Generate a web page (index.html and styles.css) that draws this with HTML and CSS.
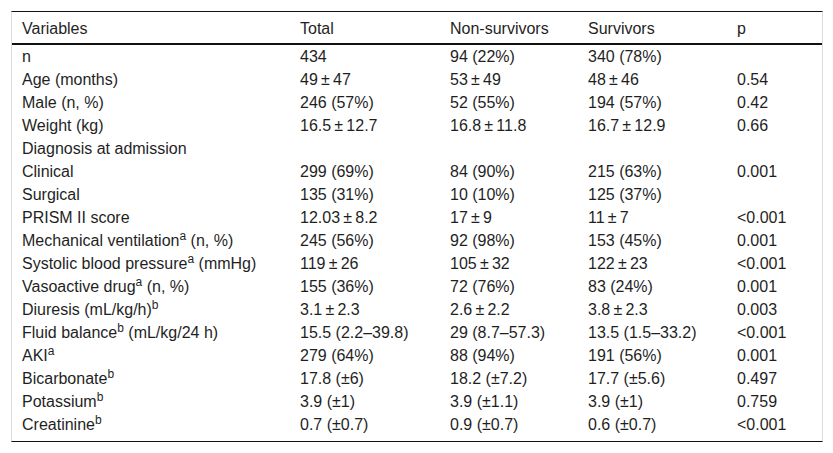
FILE: index.html
```html
<!DOCTYPE html>
<html lang="en">
<head>
<meta charset="utf-8">
<title>Table</title>
<link rel="stylesheet" href="styles.css">
</head>
<body>
<div class="frame">
  <table class="data">
    <colgroup>
      <col class="c1"><col class="c2"><col class="c3"><col class="c4"><col class="c5">
    </colgroup>
    <thead>
      <tr><th>Variables</th><th>Total</th><th>Non-survivors</th><th>Survivors</th><th>p</th></tr>
    </thead>
    <tbody>
      <tr><td>n</td><td>434</td><td>94 (22%)</td><td>340 (78%)</td><td></td></tr>
      <tr><td>Age (months)</td><td>49&thinsp;±&thinsp;47</td><td>53&thinsp;±&thinsp;49</td><td>48&thinsp;±&thinsp;46</td><td>0.54</td></tr>
      <tr><td>Male (n, %)</td><td>246 (57%)</td><td>52 (55%)</td><td>194 (57%)</td><td>0.42</td></tr>
      <tr><td>Weight (kg)</td><td>16.5&thinsp;±&thinsp;12.7</td><td>16.8&thinsp;±&thinsp;11.8</td><td>16.7&thinsp;±&thinsp;12.9</td><td>0.66</td></tr>
      <tr><td>Diagnosis at admission</td><td></td><td></td><td></td><td></td></tr>
      <tr><td>Clinical</td><td>299 (69%)</td><td>84 (90%)</td><td>215 (63%)</td><td>0.001</td></tr>
      <tr><td>Surgical</td><td>135 (31%)</td><td>10 (10%)</td><td>125 (37%)</td><td></td></tr>
      <tr><td>PRISM II score</td><td>12.03&thinsp;±&thinsp;8.2</td><td>17&thinsp;±&thinsp;9</td><td>11&thinsp;±&thinsp;7</td><td>&lt;0.001</td></tr>
      <tr><td>Mechanical ventilation<sup>a</sup> (n, %)</td><td>245 (56%)</td><td>92 (98%)</td><td>153 (45%)</td><td>0.001</td></tr>
      <tr><td>Systolic blood pressure<sup>a</sup> (mmHg)</td><td>119&thinsp;±&thinsp;26</td><td>105&thinsp;±&thinsp;32</td><td>122&thinsp;±&thinsp;23</td><td>&lt;0.001</td></tr>
      <tr><td>Vasoactive drug<sup>a</sup> (n, %)</td><td>155 (36%)</td><td>72 (76%)</td><td>83 (24%)</td><td>0.001</td></tr>
      <tr><td>Diuresis (mL/kg/h)<sup>b</sup></td><td>3.1&thinsp;±&thinsp;2.3</td><td>2.6&thinsp;±&thinsp;2.2</td><td>3.8&thinsp;±&thinsp;2.3</td><td>0.003</td></tr>
      <tr><td>Fluid balance<sup>b</sup> (mL/kg/24 h)</td><td>15.5 (2.2–39.8)</td><td>29 (8.7–57.3)</td><td>13.5 (1.5–33.2)</td><td>&lt;0.001</td></tr>
      <tr><td>AKI<sup>a</sup></td><td>279 (64%)</td><td>88 (94%)</td><td>191 (56%)</td><td>0.001</td></tr>
      <tr><td>Bicarbonate<sup>b</sup></td><td>17.8 (±6)</td><td>18.2 (±7.2)</td><td>17.7 (±5.6)</td><td>0.497</td></tr>
      <tr><td>Potassium<sup>b</sup></td><td>3.9 (±1)</td><td>3.9 (±1.1)</td><td>3.9 (±1)</td><td>0.759</td></tr>
      <tr><td>Creatinine<sup>b</sup></td><td>0.7 (±0.7)</td><td>0.9 (±0.7)</td><td>0.6 (±0.7)</td><td>&lt;0.001</td></tr>
    </tbody>
  </table>
</div>
</body>
</html>
```

FILE: styles.css
```css
html, body {
  margin: 0;
  padding: 0;
  background: #ffffff;
}

body {
  padding: 11px 0 0 11px;
  font-family: "Liberation Sans", Arial, sans-serif;
  font-size: 16px;
  color: #1f1f1f;
}

.frame {
  width: 810px;
  border-top: 1px solid #111;
  border-bottom: 1px solid #111;
  border-left: 1px solid #dcdcdc;
  border-right: 1px solid #dcdcdc;
  padding-bottom: 5px;
}

.data {
  width: 810px;
  table-layout: fixed;
  border-collapse: separate;
  border-spacing: 0;
}

.c1 { width: 278px; }
.c2 { width: 150px; }
.c3 { width: 138px; }
.c4 { width: 149px; }
.c5 { width: 95px; }

.data th {
  font-weight: normal;
  text-align: left;
  line-height: 19px;
  height: 19px;
  padding: 7px 4px 5px 10px;
  border-bottom: 2px solid #111;
  white-space: nowrap;
}

.data td {
  text-align: left;
  line-height: 19px;
  height: 19px;
  padding: 2px 4px 2px 10px;
  white-space: nowrap;
}

.data sup {
  font-size: 12px;
  line-height: 0;
  vertical-align: 6px;
}
```
